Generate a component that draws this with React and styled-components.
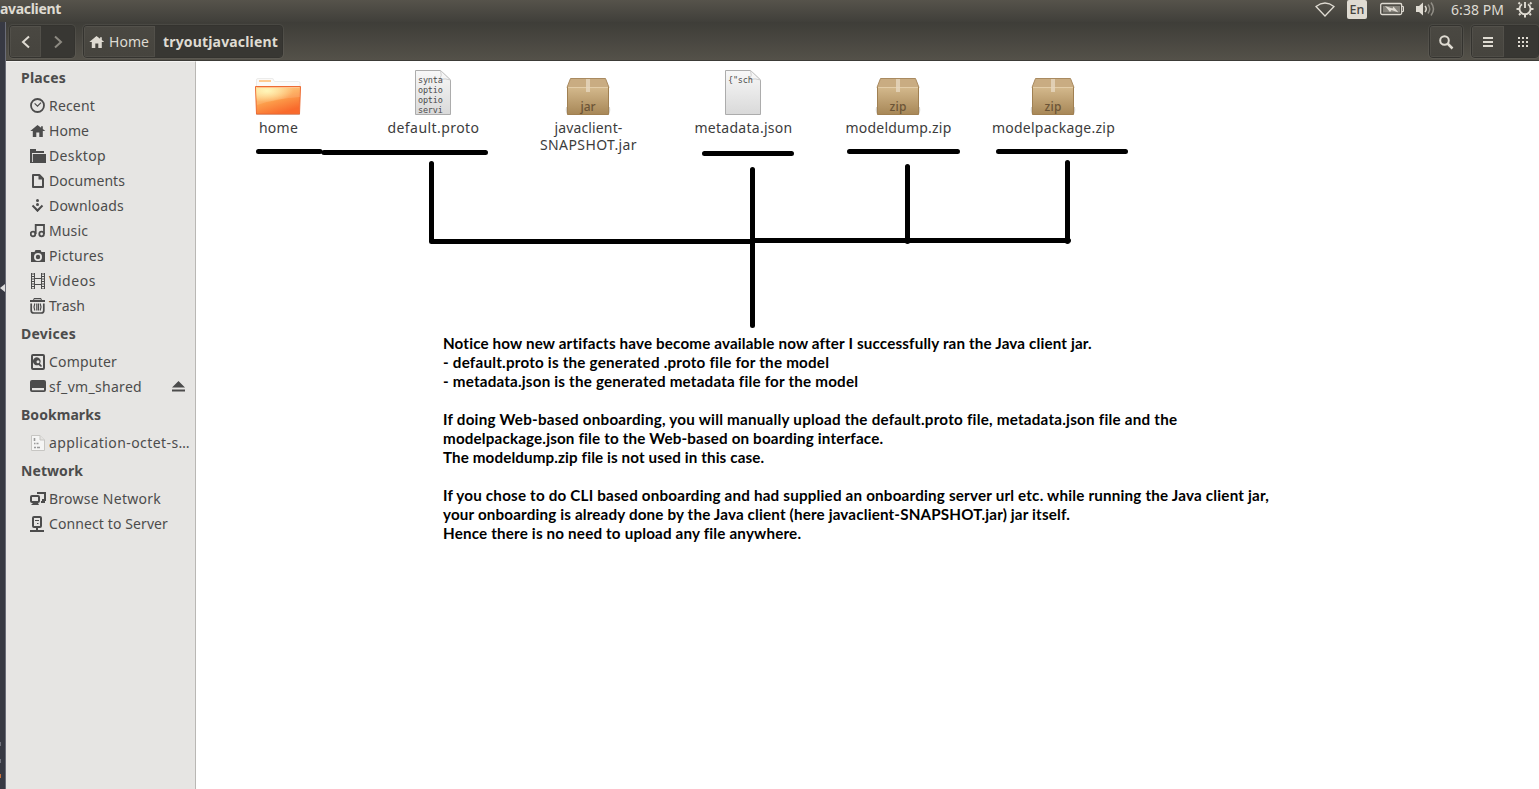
import React, { useLayoutEffect, useRef, useState } from 'react';
import styled, { createGlobalStyle } from 'styled-components';

const Global = createGlobalStyle`
  * { box-sizing: border-box; }
  body { margin: 0; background: #fff; }
`;
const ui = `"Noto Sans", "Open Sans", sans-serif`;
const DARK = '#4c4c4c';
const LIGHT = '#dfdbd2';

const Run = styled.span`
  display: inline-block;
  white-space: pre;
`;

/* Text tracked so that it spans the given width */
function Text({ w, children }) {
  const ref = useRef(null);
  const [track, setTrack] = useState(0);
  useLayoutEffect(() => {
    const el = ref.current;
    if (!w || !el) return;
    el.style.letterSpacing = '0px';
    const natural = el.getBoundingClientRect().width;
    const t = (w - natural) / children.length;
    el.style.letterSpacing = `${t}px`;
    setTrack(t);
  }, [w, children]);
  return <Run ref={ref} style={{ letterSpacing: `${track}px` }}>{children}</Run>;
}

const Screen = styled.div`
  display: flex;
  flex-direction: column;
  width: 1539px;
  height: 789px;
  overflow: hidden;
  font-family: ${ui};
  font-size: 14px;
  color: ${DARK};
`;
const Panel = styled.header`
  display: flex;
  align-items: center;
  justify-content: space-between;
  height: 22px;
  flex: none;
  padding-bottom: 4px;
  background: linear-gradient(#56534b, #403f3a);
  color: ${LIGHT};
`;
const PanelTitle = styled.div`
  font-weight: 700;
  line-height: 18px;
`;
const Tray = styled.div`
  display: flex;
  align-items: center;
  height: 18px;
  width: 224px;
`;
const Slot = styled.div`
  display: flex;
  flex: none;
  width: ${p => p.$w}px;
`;
const Lang = styled.div`
  width: 20px;
  height: 19px;
  border-radius: 2px;
  background: ${LIGHT};
  color: #45433e;
  font-size: 12.5px;
  font-weight: 500;
  line-height: 20px;
  text-align: center;
`;
const Desk = styled.div`
  display: flex;
  flex: 1;
  min-height: 0;
`;
const Launcher = styled.div`
  display: flex;
  flex-direction: column;
  width: 6px;
  background: #373943;
  border-right: 1px solid #6a6c77;
  padding-top: 262px;
`;
const Pip = styled.i`
  width: 1px;
  height: 4px;
  margin-top: ${p => p.$gap}px;
  background: ${p => p.$c};
`;
const Window = styled.div`
  display: flex;
  flex-direction: column;
  flex: 1;
`;
const Toolbar = styled.div`
  display: flex;
  align-items: center;
  height: 39px;
  padding: 1px 0 0 3px;
  background: linear-gradient(#3e3d38, #545149);
  border-bottom: 1px solid #3c3b37;
  color: ${LIGHT};
`;
const Group = styled.div`
  display: flex;
  height: 33px;
  margin-left: ${p => p.$gap || 0}px;
  border: 1px solid #34332f;
  border-radius: 4px;
  box-shadow: 0 0 0 1px rgba(255,255,255,.055);
  overflow: hidden;
`;
const ToolButton = styled.div`
  display: flex;
  align-items: center;
  justify-content: ${p => (p.$start ? 'flex-start' : 'center')};
  gap: 4px;
  width: ${p => p.$w}px;
  padding-left: ${p => p.$start || p.$nudge || 0}px;
  background: ${p => (p.$pressed ? '#383733' : 'linear-gradient(#4a4842, #46443e)')};
  font-weight: ${p => (p.$bold ? 700 : 400)};
  box-shadow: ${p => (p.$pressed ? 'none' : 'inset 0 0 0 1px rgba(255,255,255,.05)')};
`;
const Spacer = styled.div`flex: 1;`;
const Body = styled.div`
  display: flex;
  flex: 1;
`;
const Sidebar = styled.nav`
  width: 190px;
  padding: 0 0 0 15px;
  background: #e6e5e3;
  border-right: 1px solid #b9b7b4;
  border-top: 1px solid #f4f3f2;
`;
const Heading = styled.h2`
  height: 31px;
  margin: 0;
  font-size: 14px;
  font-weight: 700;
  line-height: 31px;
`;
const Row = styled.div`
  display: flex;
  align-items: center;
  height: 25px;
  padding-left: 9px;
  line-height: 25px;
`;
const RowIcon = styled.span`
  display: flex;
  width: 19px;
`;
const Eject = styled.span`
  display: flex;
  margin-left: 30px;
`;
const Main = styled.main`
  position: relative;
  flex: 1;
  background: #fff;
`;
const Files = styled.div`
  display: flex;
  height: 273px;
  padding: 8px 0 0 4px;
`;
const File = styled.div`
  display: flex;
  flex-direction: column;
  align-items: center;
  width: 155px;
  color: #3c3c3c;
`;
const FileIcon = styled.div`
  display: flex;
  height: 50px;
`;
const FileName = styled.div`
  line-height: 17px;
  text-align: center;
  display: flex;
  flex-direction: column;
  align-items: center;
  padding-left: 2px;
`;
const Note = styled.div`
  padding-left: 247px;
  font: 700 15.2px/19px Lato, sans-serif;
  color: #000;
`;
const NoteLine = styled.div`height: 19px;`;
const Marks = styled.svg`
  position: absolute;
  left: 0;
  top: 0;
  pointer-events: none;
`;

const S = ({ w = 16, h = 16, children, ...p }) => (
  <svg width={w} height={h} viewBox={`0 0 ${w} ${h}`} fill="none" {...p}>{children}</svg>
);
const HomeIcon = ({ c = DARK }) => (
  <S><path fill={c} d="M7.500 2 .3 8h2.500v6h3.500V9.500h3V14h3.500V8h2.500L12.800 6V3.200h-1.700v1.500z" /></S>
);
const icons = {
  recent: <S><circle cx="7.500" cy="7.500" r="6.500" stroke={DARK} strokeWidth="1.800" /><path d="m4.600 5.300 2.900 2.900L11 4.700" stroke={DARK} strokeWidth="1.200" /></S>,
  home: <HomeIcon />,
  desktop: <S><path fill={DARK} d="M0 1h6v2h8v2H2v10H0z" /><path fill={DARK} d="M3 6h13v9H2V6z" /><path stroke="#e6e5e3" d="M2.500 14V5.500H15" strokeWidth=".8" /></S>,
  documents: <S><path d="M3 2h6.300L13 5.800V14H3z" stroke={DARK} strokeWidth="2" strokeLinejoin="round" /><path d="M8.500 2v4.500H13" fill={DARK} /></S>,
  downloads: <S><circle cx="7.500" cy="2.500" r="1.500" fill={DARK} /><circle cx="7.500" cy="6.500" r="1.500" fill={DARK} /><path d="m2.500 7.500 5 5 5-5" stroke={DARK} strokeWidth="2" /><path fill={DARK} d="M5 11h5l-2.500 3z" /></S>,
  music: <S><circle cx="3" cy="11" r="2.300" stroke={DARK} strokeWidth="1.800" /><circle cx="11.600" cy="11" r="2.300" stroke={DARK} strokeWidth="1.800" /><path d="M5.700 11V2H14v9" stroke={DARK} strokeWidth="1.800" /></S>,
  pictures: <S><path fill={DARK} fillRule="evenodd" d="M1 4h3.500l1-2h5l1 2H15v10H1zM8 5a4 4 0 1 0 0 8 4 4 0 0 0 0-8m0 1.800a2.200 2.200 0 1 1 0 4.400 2.200 2.200 0 0 1 0-4.400" /></S>,
  videos: <S><path stroke={DARK} d="M1.500 0v16M4.500 0v16M11.500 0v16M14.500 0v16M5 5.500h6M5 11.500h6" /><path stroke={DARK} strokeWidth="2" strokeDasharray="1 1.500" d="M3 .5V16M13 .5V16" /></S>,
  trash: <S><path fill={DARK} fillRule="evenodd" d="M4 0h7l1 2h3v2H0V2h3zM4.500 1.200 4 2h7l-.5-.8z" /><path stroke={DARK} strokeWidth="1.700" d="M1.200 5.500v7q0 2.500 2.500 2.500h7.600q2.500 0 2.500-2.500v-7" /><path stroke={DARK} strokeWidth="1.200" d="M4.800 5.500q-1.600 3.500 0 7M10.200 5.500q1.600 3.500 0 7M6.800 5.500v7M8.500 5.500v7" /></S>,
  computer: <S><rect x="2" y="1" width="12" height="14" rx="1" stroke={DARK} strokeWidth="2" /><path fill={DARK} fillRule="evenodd" d="M8 3.500a4 4 0 1 0 .5 7.500l2.500 2 1-1-2-2.500a4 4 0 0 0-2-6m0 2.700a1.500 1.500 0 1 1 0 3 1.500 1.500 0 0 1 0-3" /></S>,
  drive: <S><path fill={DARK} fillRule="evenodd" d="M2 1h12q2 0 2 2v8q0 2-2 2H2q-2 0-2-2V3q0-2 2-2M2 9v2.300h12V9z" /></S>,
  file: <S><path d="M1.500.5h8.500L14.500 5v10.500h-13z" fill="#f5f5f4" stroke="#c7c6c3" /><path d="M10 .5V5h4.500" fill="#e4e3e0" stroke="#c7c6c3" /><path stroke="#999" d="M4.500 3v3M4 8.500h1.500M6.500 8.500h2M4 12.500h2M7 12.500h3" strokeWidth="1.600" /></S>,
  network: <S><path d="M7 2h8v7h-3" stroke={DARK} strokeWidth="2" /><path d="M11 10h4v2h-4z" fill={DARK} /><rect x="1" y="5" width="8" height="6" rx="1" stroke={DARK} strokeWidth="2" /><path d="M3 12h5l1 2H1z" fill={DARK} /></S>,
  server: <S><rect x="3" y="1" width="8" height="10" rx="1" stroke={DARK} strokeWidth="2" /><path d="M5 4.500h4M7 7.500h1.500" stroke={DARK} /><path d="M7 11v4M0 15h14" stroke={DARK} strokeWidth="2" /></S>,
};
const sections = [
  ['Places', 45, [['recent', 'Recent', 46], ['home', 'Home', 40], ['desktop', 'Desktop', 57], ['documents', 'Documents', 76], ['downloads', 'Downloads', 75], ['music', 'Music', 39], ['pictures', 'Pictures', 55], ['videos', 'Videos', 47], ['trash', 'Trash', 36]]],
  ['Devices', 55, [['computer', 'Computer', 68], ['drive', 'sf_vm_shared', 93, true]]],
  ['Bookmarks', 80, [['file', 'application-octet-s…', 141]]],
  ['Network', 62, [['network', 'Browse Network', 112], ['server', 'Connect to Server', 119]]],
];

const Folder = () => (
  <S w={48} h={48}>
    <defs>
      <linearGradient id="fold" x1="0" y1="0" x2=".5" y2="1"><stop stopColor="#ffd98c" /><stop offset=".5" stopColor="#fda650" /><stop offset="1" stopColor="#f96a2c" /></linearGradient>
      <radialGradient id="glow" cx=".25" cy=".2" r=".6"><stop stopColor="#fff6b0" /><stop offset="1" stopColor="#fff6b0" stopOpacity="0" /></radialGradient>
    </defs>
    <path d="M2.500 18V11q0-1.500 1.500-1.500h14q1.500 0 1.500 1.500l1 1.500h24q1.500 0 1.500 1.500v4" fill="#fbfaf9" stroke="#ececeb" />
    <path d="M5 12h12" stroke="#ffc078" strokeWidth="1.600" />
    <path d="M2 45.500h44" stroke="#ccc" />
    <path d="M1.500 17.500h45l-1 27.500h-43z" fill="url(#fold)" stroke="#ed6b33" />
    <path d="M2 18h44v10Q22 30 2.500 37z" fill="url(#glow)" />
    <path d="M2.500 18.500h43" stroke="#ffc48e" />
    <path d="M46 19v9Q24 29 3 36V19z" fill="#fff" opacity=".12" />
  </S>
);
const Glyphs = styled.text`
  font-family: ${p => (p.$mono ? '"DejaVu Sans Mono", monospace' : '"Noto Sans", sans-serif')};
  font-size: ${p => (p.$mono ? 8.5 : 12)}px;
  font-weight: ${p => (p.$mono ? 400 : 500)};
  fill: ${p => (p.$mono ? '#4c4c4c' : '#6b5436')};
`;
const Doc = ({ lines }) => (
  <S w={48} h={48}>
    <defs><linearGradient id="doc" x1="0" y1="0" x2="0" y2="1"><stop stopColor="#f8f8f8" /><stop offset="1" stopColor="#d9d9d9" /></linearGradient></defs>
    <path d="M6.500 1.500h25l10 9.500v34.500h-35z" fill="url(#doc)" stroke="#acacac" />
    <path d="M31.500 1.500q2 5-1 9 6-1.500 11 .5z" fill="#f6f6f6" stroke="#c4c4c4" strokeWidth=".8" />
    {lines.map((l, i) => <Glyphs $mono key={i} x="9" y={14 + i * 10} textLength={l.length * 4.95}>{l}</Glyphs>)}
  </S>
);
const Package = ({ kind }) => (
  <S w={48} h={48}>
    <defs>
      <linearGradient id="box" x1="0" y1="0" x2="0" y2="1"><stop stopColor="#d3b88c" /><stop offset="1" stopColor="#a78757" /></linearGradient>
    </defs>
    <path d="M2 38q-1 6 2 8h40q3-2 2-8" fill="#d6d3cd" />
    <path d="M6.500 9.500h35l3.500 9H3z" fill="#c9ac82" stroke="#a98a60" />
    <path d="M3.500 18.500h41v27h-41z" fill="url(#box)" stroke="#a08052" />
    <path d="M4 18.500h40" stroke="#e3cda8" />
    <path d="M22 10h4v13h-4z" fill="#e6d7bf" opacity=".8" />
    <Glyphs x="24" y="42" textAnchor="middle" textLength={kind === 'jar' ? 15 : 17}>{kind}</Glyphs>
  </S>
);
const files = [
  [<Folder />, [['home', 39]]],
  [<Doc lines={['synta', 'optio', 'optio', 'servi']} />, [['default.proto', 92]]],
  [<Package kind="jar" />, [['javaclient-', 68], ['SNAPSHOT.jar', 97]]],
  [<Doc lines={['{"sch']} />, [['metadata.json', 98]]],
  [<Package kind="zip" />, [['modeldump.zip', 106]]],
  [<Package kind="zip" />, [['modelpackage.zip', 123]]],
];
const note = [
  ['Notice how new artifacts have become available now after I successfully ran the Java client jar.', 649],
  ['- default.proto is the generated .proto file for the model', 386],
  ['- metadata.json is the generated metadata file for the model', 415],
  null,
  ['If doing Web-based onboarding, you will manually upload the default.proto file, metadata.json file and the', 734],
  ['modelpackage.json file to the Web-based on boarding interface.', 440],
  ['The modeldump.zip file is not used in this case.', 321],
  null,
  ['If you chose to do CLI based onboarding and had supplied an onboarding server url etc. while running the Java client jar,', 826],
  ['your onboarding is already done by the Java client (here javaclient-SNAPSHOT.jar) jar itself.', 627],
  ['Hence there is no need to upload any file anywhere.', 358],
];

export default function App() {
  return (
    <Screen>
      <Global />
      <Panel>
        <PanelTitle><Text w={61}>avaclient</Text></PanelTitle>
        <Tray>
          <Slot $w={32}><S w={20} h={16}><path d="M1 5.500Q10-1.500 19 5.500L10 15z" stroke={LIGHT} strokeWidth="1.300" /></S></Slot>
          <Slot $w={33}><Lang>En</Lang></Slot>
          <Slot $w={35}><S w={25} h={14}><rect x=".7" y="1.500" width="21" height="11" rx="1.500" stroke={LIGHT} strokeWidth="1.300" /><path d="M3 4h17v6.500H3z" fill="#85827a" /><path d="M22 4.500h1.500v5H22" stroke={LIGHT} /><path d="m5 4 7.500 2.500L13.500 4.500l5 6-7-2.500-1.500 2z" fill={LIGHT} /></S></Slot>
          <Slot $w={36}><S w={20} h={16}><path d="M1 5h3l4-3.500v13L4 11H1z" fill={LIGHT} /><path d="M10 5q2.500 3 0 6" stroke={LIGHT} strokeWidth="1.500" /><path d="M13 3.500q3.500 4.500 0 9M16 1.500q5 6.500 0 13" stroke="#918e86" strokeWidth="1.500" /></S></Slot>
          <Slot $w={65}><Text w={53}>6:38 PM</Text></Slot>
          <Slot $w={18}><S w={18} h={18}><path d="M6 4.200a5.500 5.500 0 1 0 6 0M9 2v6" stroke={LIGHT} strokeWidth="1.900" /><path d="M4 4 2.500 2.500M14 4l1.500-1.500M3 9H.5M15 9h2.500M4.500 13.500 3 15M13.500 13.500 15 15M9 15v2.500" stroke={LIGHT} strokeWidth="2" /></S></Slot>
        </Tray>
      </Panel>
      <Desk>
        <Launcher>
          <S w={5} h={10}><path d="M5 0v8L0 4z" fill="#ddd" /></S>
          <Pip $gap={448} $c="#70727c" />
          <Pip $gap={13} $c="#70727c" />
          <Pip $gap={11} $c="#c8703c" />
        </Launcher>
        <Window>
          <Toolbar>
            <Group>
              <ToolButton $w={31}><S><path d="m11 2.500-6 5.500 6 5.500" stroke={LIGHT} strokeWidth="2" /></S></ToolButton>
              <ToolButton $w={33} $pressed><S><path d="m5 2.500 6 5.500-6 5.500" stroke="#8d8a82" strokeWidth="2" /></S></ToolButton>
            </Group>
            <Group $gap={8}>
              <ToolButton $w={71} $start={5}><HomeIcon c={LIGHT} /><Text w={40}>Home</Text></ToolButton>
              <ToolButton $w={127} $start={8} $pressed $bold><Text w={115}>tryoutjavaclient</Text></ToolButton>
            </Group>
            <Spacer />
            <Group><ToolButton $w={32}><S><circle cx="6.500" cy="6.500" r="4.300" stroke={LIGHT} strokeWidth="2" /><path d="m9.500 9.500 5 5" stroke={LIGHT} strokeWidth="2.500" /></S></ToolButton></Group>
            <Group $gap={8}>
              <ToolButton $w={32}><S><path d="M3 4h10M3 8h10M3 12h10" stroke={LIGHT} strokeWidth="2" /></S></ToolButton>
              <ToolButton $w={34} $nudge={4} $pressed><S><path d="M3 4h10M3 8h10M3 12h10" stroke={LIGHT} strokeWidth="2" strokeDasharray="2 2" /></S></ToolButton>
            </Group>
          </Toolbar>
          <Body>
            <Sidebar>
              {sections.map(([title, w, rows]) => (
                <React.Fragment key={title}>
                  <Heading><Text w={w}>{title}</Text></Heading>
                  {rows.map(([icon, label, rw, eject]) => (
                    <Row key={label}>
                      <RowIcon>{icons[icon]}</RowIcon>
                      <Text w={rw}>{label}</Text>
                      {eject && <Eject><S w={13} h={13}><path d="M6.500 1 0 7.500h13zM0 9.500h13v2H0z" fill={DARK} /></S></Eject>}
                    </Row>
                  ))}
                </React.Fragment>
              ))}
            </Sidebar>
            <Main>
              <Files>
                {files.map(([icon, names], i) => (
                  <File key={i}>
                    <FileIcon>{icon}</FileIcon>
                    <FileName>{names.map(([n, w]) => <Text key={n} w={w}>{n}</Text>)}</FileName>
                  </File>
                ))}
              </Files>
              <Note>
                {note.map((l, i) => <NoteLine key={i}>{l && <Text w={l[1]}>{l[0]}</Text>}</NoteLine>)}
              </Note>
              <Marks width="1000" height="300" viewBox="196 61 1000 300" fill="none" stroke="#000" strokeWidth="5" strokeLinecap="round" strokeLinejoin="round">
                <path d="M258.500 151.500H320M324 152.500H485.500M704.500 153.500H791.500M849.500 151.500H957.500M998.500 151.500H1125.500" />
                <path d="M431.500 163.500V241.500H752M752.500 169.500V325.500M752 240.500H1068.500M907.500 166.500V241.500M1067.500 162.500V241.500" />
              </Marks>
            </Main>
          </Body>
        </Window>
      </Desk>
    </Screen>
  );
}
